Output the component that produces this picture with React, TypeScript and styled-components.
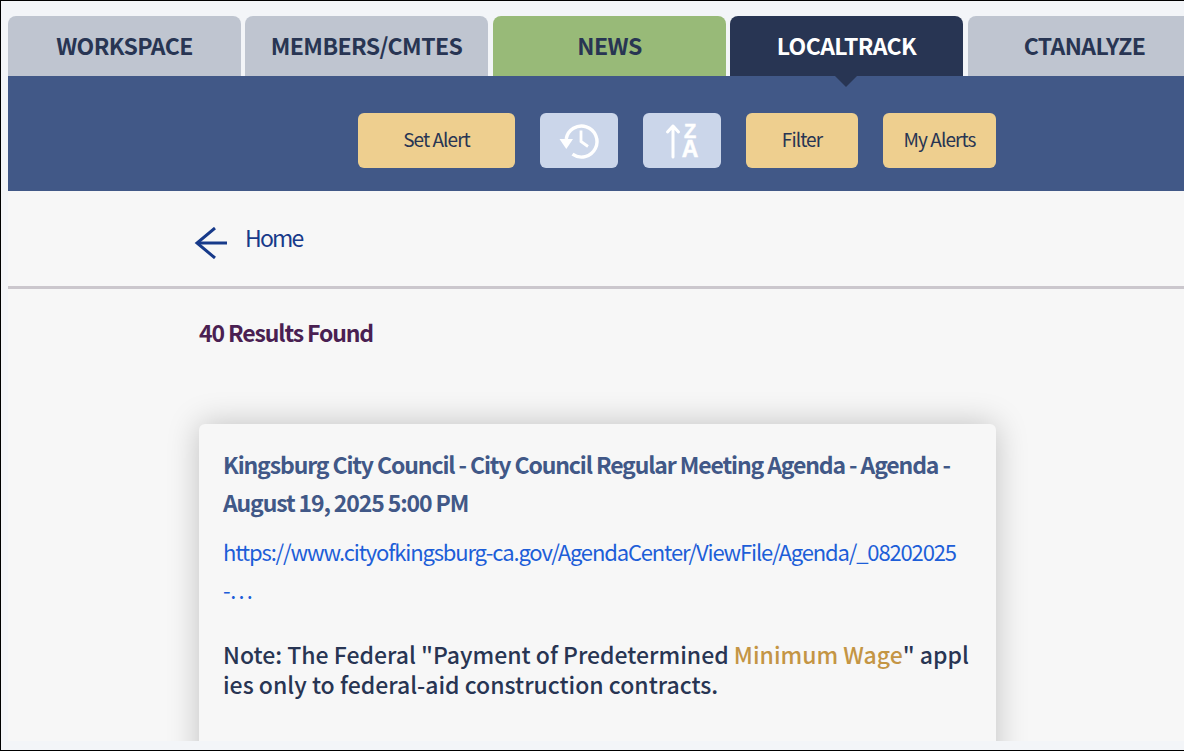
import styled, { createGlobalStyle } from "styled-components";

const GlobalStyle = createGlobalStyle`
    html, body {
        margin: 0;
        padding: 0;
        background: #f3f5f8;
    }
    * {
        box-sizing: border-box;
    }
`;

const Frame = styled.div`
    width: 1184px;
    height: 751px;
    overflow: hidden;
    border: 1px solid #000;
    border-right: 0;
    background: #f3f5f8;
    font-family: "Noto Sans CJK SC", "Noto Sans", sans-serif;
`;

const Page = styled.div`
    height: 725px;
    margin: 15px 0 0 7px;
    overflow: hidden;
    background: #f7f7f7;
`;

const Tabs = styled.nav`
    display: flex;
    height: 60px;
    width: 1300px;
    background: #f3f5f8;
`;

const Tab = styled.a<{ $bg: string; $fg: string; $w: number; $gap: number }>`
    flex: none;
    width: ${(p) => p.$w}px;
    margin-right: ${(p) => p.$gap}px;
    padding-bottom: 3px;
    display: flex;
    align-items: center;
    justify-content: center;
    background: ${(p) => p.$bg};
    color: ${(p) => p.$fg};
    border-radius: 8px 8px 0 0;
    font-size: 23px;
    font-weight: 700;
    letter-spacing: -0.58px;
`;

const Toolbar = styled.div`
    position: relative;
    height: 115px;
    background: #415887;
    display: flex;
    align-items: flex-start;
    padding: 37px 0 0 350px;
    gap: 25px;
`;

const Pointer = styled.div`
    position: absolute;
    top: 0;
    left: 827px;
    width: 0;
    height: 0;
    border-left: 11px solid transparent;
    border-right: 11px solid transparent;
    border-top: 11px solid #283553;
`;

const ActionButton = styled.button<{ $w: number }>`
    width: ${(p) => p.$w}px;
    height: 55px;
    padding: 0 0 4px;
    border: 0;
    border-radius: 6px;
    background: #eecf8f;
    color: #283553;
    font-family: inherit;
    font-size: 19px;
    letter-spacing: -0.93px;
    display: flex;
    align-items: center;
    justify-content: center;
`;

const IconButton = styled.button`
    width: 78px;
    height: 55px;
    padding: 0;
    border: 0;
    border-radius: 6px;
    background: #cbd6ea;
    color: #fff;
    display: flex;
    align-items: center;
    justify-content: center;
`;

const SortLetter = styled.text`
    font-family: inherit;
    font-weight: 700;
    fill: currentColor;
    stroke: currentColor;
    stroke-width: 0.5px;
    text-anchor: middle;
`;

const BackRow = styled.div`
    height: 95px;
    padding: 36px 0 0 186px;
    display: flex;
    align-items: flex-start;
    gap: 17px;
    color: #173a8a;
`;

const BackLabel = styled.a`
    margin-top: -1px;
    font-size: 23px;
    line-height: 22px;
    letter-spacing: -1.8px;
`;

const Divider = styled.hr`
    margin: 0;
    border: 0;
    height: 3px;
    background: #cbc7cd;
`;

const Results = styled.h2`
    margin: 30px 0 0 191px;
    font-size: 23px;
    line-height: 26px;
    font-weight: 700;
    letter-spacing: -1.13px;
    color: #4a1f52;
`;

const Card = styled.article`
    width: 797px;
    height: 400px;
    margin: 79px 0 0 191px;
    padding: 21px 24px;
    background: #f7f7f7;
    border-radius: 6px;
    box-shadow: 0 0 32px rgba(0, 0, 0, 0.22);
`;

const CardTitle = styled.h3`
    margin: 0;
    font-size: 23px;
    line-height: 38px;
    font-weight: 700;
    letter-spacing: -1.13px;
    color: #415887;
`;

const CardLink = styled.a`
    display: block;
    max-width: 740px;
    margin-top: 11px;
    font-size: 22px;
    line-height: 38px;
    letter-spacing: -1.15px;
    color: #1d5ed8;
    word-break: break-all;
`;

const Note = styled.p`
    margin: 31px 0 0;
    font-size: 23px;
    line-height: 30px;
    font-weight: 500;
    letter-spacing: 0;
    color: #283553;
    word-break: break-all;
`;

const Highlight = styled.span`
    color: #c49544;
`;

const tabs = [
    { label: "WORKSPACE", bg: "#bfc5d0", fg: "#283553", w: 233, gap: 4 },
    { label: "MEMBERS/CMTES", bg: "#bfc5d0", fg: "#283553", w: 243, gap: 5 },
    { label: "NEWS", bg: "#98ba78", fg: "#283553", w: 233, gap: 4 },
    { label: "LOCALTRACK", bg: "#283553", fg: "#ffffff", w: 233, gap: 5 },
    { label: "CTANALYZE", bg: "#bfc5d0", fg: "#283553", w: 233, gap: 0 },
];

function App() {
    return (
        <Frame>
            <GlobalStyle />
            <Page>
                <Tabs>
                    {tabs.map((tab) => (
                        <Tab key={tab.label} $bg={tab.bg} $fg={tab.fg} $w={tab.w} $gap={tab.gap}>
                            {tab.label}
                        </Tab>
                    ))}
                </Tabs>
                <Toolbar>
                    <Pointer />
                    <ActionButton $w={157}>Set Alert</ActionButton>
                    <IconButton>
                        <svg width="44" height="44" viewBox="0 0 44 44" fill="none" stroke="currentColor">
                            <path d="M9.2 20A15.5 15.5 0 1 1 15.5 35.2" strokeWidth="3.4" />
                            <path d="M2.5 20h13.5l-6.7 10z" fill="currentColor" stroke="none" />
                            <path d="M24 11.5v11l7 5" strokeWidth="2.8" />
                        </svg>
                    </IconButton>
                    <IconButton>
                        <svg width="34" height="36" viewBox="0 0 34 36" fill="none" stroke="currentColor" overflow="visible">
                            <path d="M8 34V3M2.5 9 8 3l5.5 6" strokeWidth="3" strokeLinecap="round" strokeLinejoin="round" />
                            <SortLetter x="25" y="15" fontSize="20">Z</SortLetter>
                            <SortLetter x="25" y="34" fontSize="23">A</SortLetter>
                        </svg>
                    </IconButton>
                    <ActionButton $w={112}>Filter</ActionButton>
                    <ActionButton $w={113}>My Alerts</ActionButton>
                </Toolbar>
                <BackRow>
                    <svg width="34" height="32" viewBox="0 0 34 32" fill="none" stroke="currentColor" strokeWidth="3">
                        <path d="M33 16H3" />
                        <path d="M21 1 3 16l18 15" />
                    </svg>
                    <BackLabel>Home</BackLabel>
                </BackRow>
                <Divider />
                <Results>40 Results Found</Results>
                <Card>
                    <CardTitle>
                        Kingsburg City Council - City Council Regular Meeting Agenda - Agenda - August 19, 2025 5:00 PM
                    </CardTitle>
                    <CardLink>
                        https://www.cityofkingsburg-ca.gov/AgendaCenter/ViewFile/Agenda/_08202025 -…
                    </CardLink>
                    <Note>
                        Note: The Federal "Payment of Predetermined <Highlight>Minimum Wage</Highlight>" applies only to federal-aid construction contracts.
                    </Note>
                </Card>
            </Page>
        </Frame>
    );
}

export default App;
